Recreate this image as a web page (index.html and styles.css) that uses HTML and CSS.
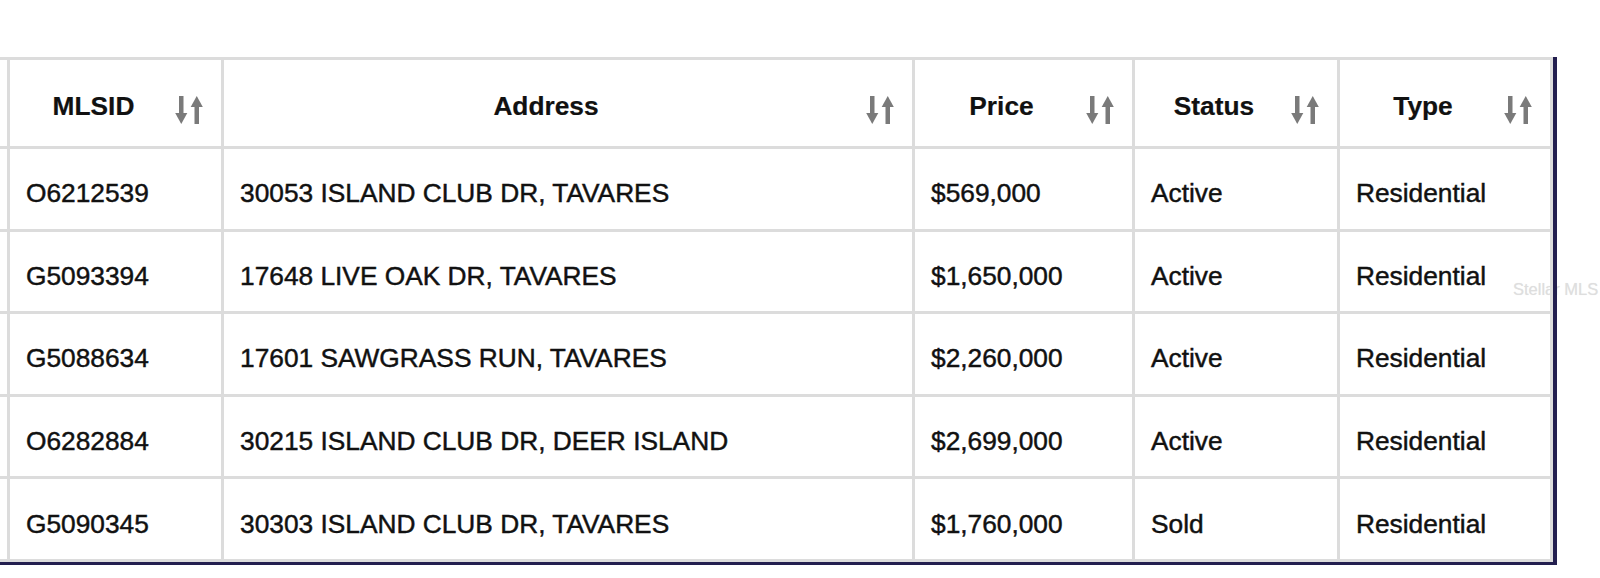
FILE: index.html
```html
<!DOCTYPE html>
<html lang="en">
<head>
<meta charset="utf-8">
<title>Listings</title>
<link rel="stylesheet" href="styles.css">
</head>
<body>
<div class="page">
  <div class="listings">
    <div class="grid">
      <div class="row head">
        <div class="cell edge"></div>
        <div class="cell th"><span class="label">MLSID</span><svg class="sort" viewBox="0 0 28 28"><rect x="4" y="0" width="4.5" height="19"/><polygon points="0.2,17 12.3,17 6.25,28"/><rect x="19.5" y="9" width="4.5" height="19"/><polygon points="15.7,11 27.8,11 21.75,0"/></svg></div>
        <div class="cell th"><span class="label">Address</span><svg class="sort" viewBox="0 0 28 28"><rect x="4" y="0" width="4.5" height="19"/><polygon points="0.2,17 12.3,17 6.25,28"/><rect x="19.5" y="9" width="4.5" height="19"/><polygon points="15.7,11 27.8,11 21.75,0"/></svg></div>
        <div class="cell th"><span class="label">Price</span><svg class="sort" viewBox="0 0 28 28"><rect x="4" y="0" width="4.5" height="19"/><polygon points="0.2,17 12.3,17 6.25,28"/><rect x="19.5" y="9" width="4.5" height="19"/><polygon points="15.7,11 27.8,11 21.75,0"/></svg></div>
        <div class="cell th"><span class="label">Status</span><svg class="sort" viewBox="0 0 28 28"><rect x="4" y="0" width="4.5" height="19"/><polygon points="0.2,17 12.3,17 6.25,28"/><rect x="19.5" y="9" width="4.5" height="19"/><polygon points="15.7,11 27.8,11 21.75,0"/></svg></div>
        <div class="cell th"><span class="label">Type</span><svg class="sort" viewBox="0 0 28 28"><rect x="4" y="0" width="4.5" height="19"/><polygon points="0.2,17 12.3,17 6.25,28"/><rect x="19.5" y="9" width="4.5" height="19"/><polygon points="15.7,11 27.8,11 21.75,0"/></svg></div>
      </div>
      <div class="row">
        <div class="cell edge"></div>
        <div class="cell">O6212539</div>
        <div class="cell">30053 ISLAND CLUB DR, TAVARES</div>
        <div class="cell">$569,000</div>
        <div class="cell">Active</div>
        <div class="cell">Residential</div>
      </div>
      <div class="row">
        <div class="cell edge"></div>
        <div class="cell">G5093394</div>
        <div class="cell">17648 LIVE OAK DR, TAVARES</div>
        <div class="cell">$1,650,000</div>
        <div class="cell">Active</div>
        <div class="cell">Residential</div>
      </div>
      <div class="row">
        <div class="cell edge"></div>
        <div class="cell">G5088634</div>
        <div class="cell">17601 SAWGRASS RUN, TAVARES</div>
        <div class="cell">$2,260,000</div>
        <div class="cell">Active</div>
        <div class="cell">Residential</div>
      </div>
      <div class="row">
        <div class="cell edge"></div>
        <div class="cell">O6282884</div>
        <div class="cell">30215 ISLAND CLUB DR, DEER ISLAND</div>
        <div class="cell">$2,699,000</div>
        <div class="cell">Active</div>
        <div class="cell">Residential</div>
      </div>
      <div class="row">
        <div class="cell edge"></div>
        <div class="cell">G5090345</div>
        <div class="cell">30303 ISLAND CLUB DR, TAVARES</div>
        <div class="cell">$1,760,000</div>
        <div class="cell">Sold</div>
        <div class="cell">Residential</div>
      </div>
    </div>
  </div>
  <div class="watermark">Stellar MLS</div>
</div>
</body>
</html>
```

FILE: styles.css
```css
html {
  margin: 0;
  padding: 0;
  background: #ffffff;
}

body {
  margin: 0;
  padding: 0;
  font-family: "Liberation Sans", Arial, Helvetica, sans-serif;
  color: #111111;
}

.page {
  position: relative;
  padding-top: 57px;
  height: 521px;
  overflow: hidden;
}

.listings {
  width: 1553px;
  border-right: 4px solid #231f4f;
  border-bottom: 3px solid #231f4f;
}

.grid {
  border-top: 3px solid #dcdcdc;
}

.row {
  display: grid;
  grid-template-columns: 10px 214px 691px 220px 205px 213px;
  height: 82.6px;
}

.row.head {
  height: 89px;
}

.cell {
  box-sizing: border-box;
  display: flex;
  align-items: center;
  min-width: 0;
  padding: 10px 16px 0 16px;
  border-right: 3px solid #dcdcdc;
  border-bottom: 3px solid #dcdcdc;
  font-size: 26.3px;
  white-space: nowrap;
  -webkit-text-stroke: 0.45px #111111;
}

.cell.edge {
  padding: 0;
}

.th {
  padding-top: 6px;
  padding-right: 18px;
  font-size: 26.3px;
  font-weight: bold;
  -webkit-text-stroke: 0.2px #111111;
}

.label {
  flex: 1;
  text-align: center;
}

.sort {
  flex: none;
  width: 28px;
  height: 28px;
  margin-left: 14px;
  margin-top: 8px;
  fill: #7a7a7a;
}

.watermark {
  position: absolute;
  left: 1513px;
  top: 280px;
  z-index: -1;
  font-size: 16.5px;
  color: #dedede;
  text-shadow: 0 0 1px #e8e8e8;
  white-space: nowrap;
}
```
